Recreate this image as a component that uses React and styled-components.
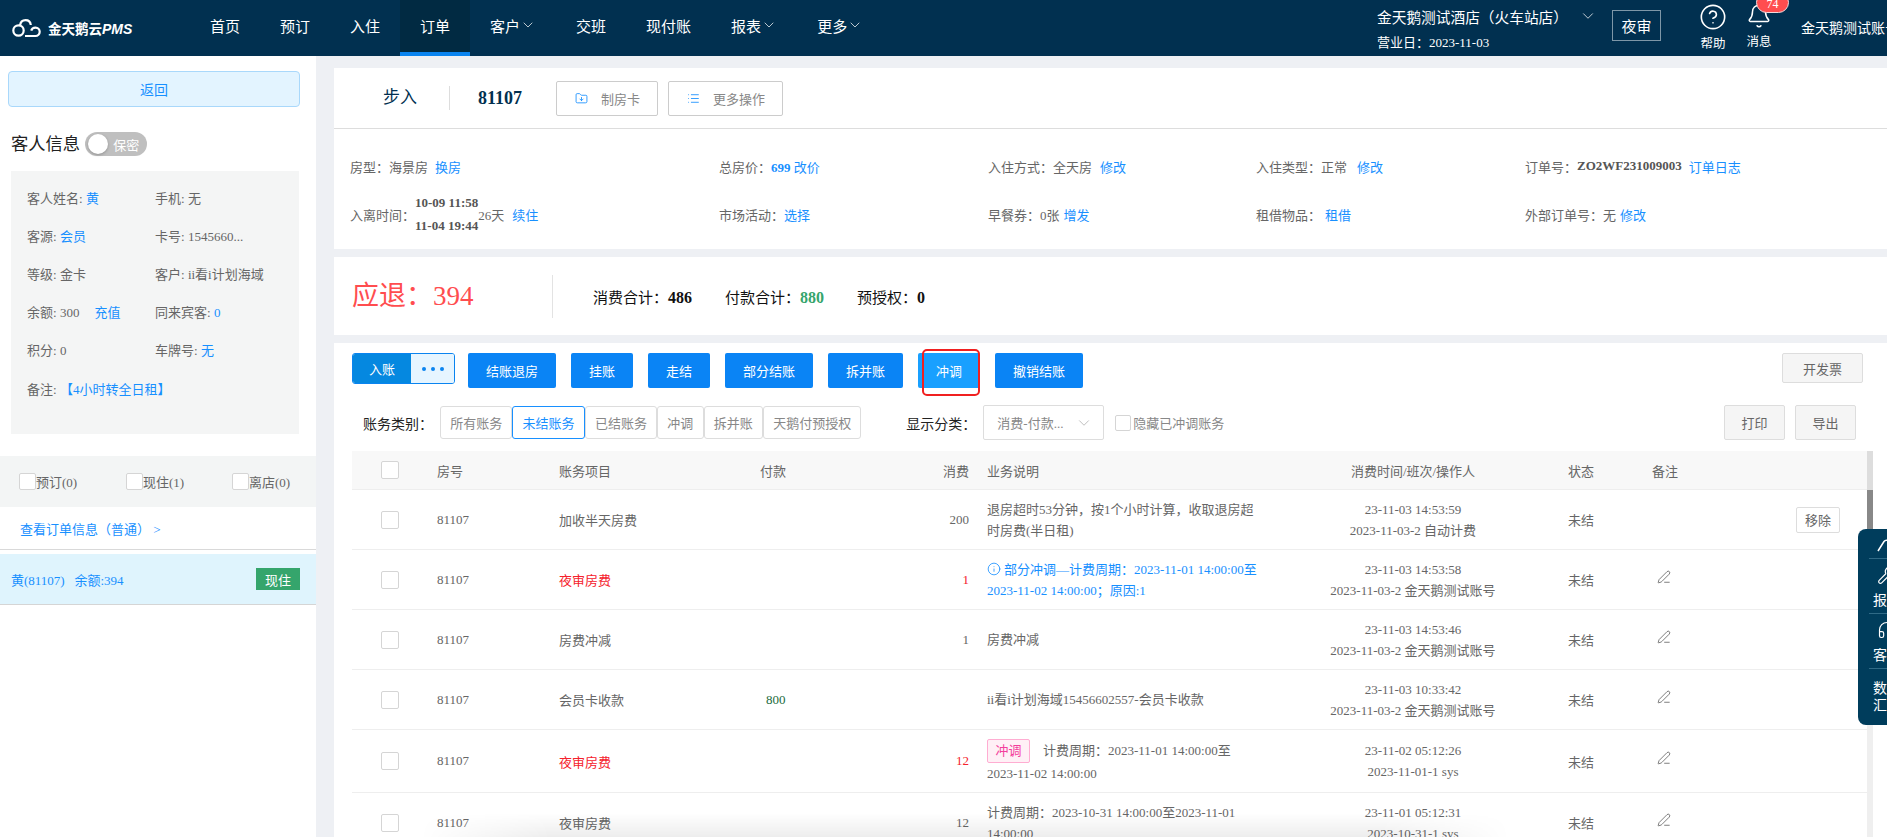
import styled, { createGlobalStyle } from "styled-components";
import { Bell, ChevronDown, CircleHelp, FolderDown, Headphones, Info, List, PenLine, Wrench } from "lucide-react";

const GlobalStyle = createGlobalStyle`
  html, body {
    margin: 0;
    padding: 0;
    height: 100%;
    overflow: hidden;
    background: #eef0f4;
    font-family: "Liberation Serif", "Noto Sans CJK SC", serif;
    font-size: 13px;
    color: #666;
  }
  * { box-sizing: border-box; }
`;

const navItems = [
  { label: "首页" },
  { label: "预订" },
  { label: "入住" },
  { label: "订单", active: true },
  { label: "客户", arrow: true },
  { label: "交班" },
  { label: "现付账" },
  { label: "报表", arrow: true },
  { label: "更多", arrow: true },
];

const guestRows = [
  [
    { label: "客人姓名: ", link: "黄" },
    { label: "手机: ", value: "无" },
  ],
  [
    { label: "客源: ", link: "会员" },
    { label: "卡号: ", value: "1545660..." },
  ],
  [
    { label: "等级: ", value: "金卡" },
    { label: "客户: ", value: "ii看i计划海域" },
  ],
  [
    { label: "余额: ", value: "300", action: "充值" },
    { label: "同来宾客: ", link: " 0" },
  ],
  [
    { label: "积分: ", value: "0" },
    { label: "车牌号: ", link: "无" },
  ],
];

const actions = ["结账退房", "挂账", "走结", "部分结账", "拆并账", "冲调", "撤销结账"];
const billTabs = ["所有账务", "未结账务", "已结账务", "冲调", "拆并账", "天鹅付预授权"];

const rows = [
  {
    name: "加收半天房费",
    fee: "200",
    desc: "退房超时53分钟，按1个小时计算，收取退房超时房费(半日租)",
    time: "23-11-03 14:53:59",
    shift: "2023-11-03-2 自动计费",
    removable: true,
  },
  {
    name: "夜审房费",
    red: true,
    fee: "1",
    info: true,
    desc: "部分冲调—计费周期：2023-11-01 14:00:00至2023-11-02 14:00:00；原因:1",
    time: "23-11-03 14:53:58",
    shift: "2023-11-03-2 金天鹅测试账号",
  },
  {
    name: "房费冲减",
    fee: "1",
    desc: "房费冲减",
    time: "23-11-03 14:53:46",
    shift: "2023-11-03-2 金天鹅测试账号",
  },
  {
    name: "会员卡收款",
    pay: "800",
    desc: "ii看i计划海域15456602557-会员卡收款",
    time: "23-11-03 10:33:42",
    shift: "2023-11-03-2 金天鹅测试账号",
  },
  {
    name: "夜审房费",
    red: true,
    fee: "12",
    tag: "冲调",
    tall: true,
    desc: "计费周期：2023-11-01 14:00:00至2023-11-02 14:00:00",
    time: "23-11-02 05:12:26",
    shift: "2023-11-01-1 sys",
  },
  {
    name: "夜审房费",
    fee: "12",
    desc: "计费周期：2023-10-31 14:00:00至2023-11-01 14:00:00",
    time: "23-11-01 05:12:31",
    shift: "2023-10-31-1 sys",
  },
];

const Logo = () => (
  <LogoWrap>
    <svg width="29" height="19" viewBox="0 0 29 19" fill="none" stroke="#fff" strokeWidth="2.2">
      <circle cx="6.5" cy="11.5" r="5.2" />
      <path d="M8 6.5C8.5 3 11 1.2 13.5 1.2c3 0 5 2 5.3 4.8M13 17h10.5a4.2 4.2 0 0 0 0-8.4c-2.3 0-3.8 1.2-4.3 3" />
    </svg>
    <LogoText>
      金天鹅云<LogoPms>PMS</LogoPms>
    </LogoText>
  </LogoWrap>
);

const App = () => {
  return (
    <>
      <GlobalStyle />
      <Header>
        <Logo />
        <Nav>
          {navItems.map((item) => (
            <NavItem key={item.label} $active={item.active}>
              {item.label}
              {item.arrow && <ChevronDown size={16} strokeWidth={1.1} />}
            </NavItem>
          ))}
        </Nav>
        <HotelBlock>
          <HotelName>
            金天鹅测试酒店（火车站店）
            <ChevronDown size={18} strokeWidth={1} />
          </HotelName>
          <BusinessDay>营业日：2023-11-03</BusinessDay>
        </HotelBlock>
        <NightAudit>夜审</NightAudit>
        <HeaderTool $first>
          <CircleHelp size={28} strokeWidth={1.4} />
          <span>帮助</span>
        </HeaderTool>
        <HeaderTool>
          <Bell size={26} strokeWidth={1.4} />
          <span>消息</span>
          <Badge>74</Badge>
        </HeaderTool>
        <Account>金天鹅测试账号</Account>
      </Header>

      <Body>
        <Sidebar>
          <BackButton>返回</BackButton>
          <GuestTitle>
            <GuestName>客人信息</GuestName>
            <Secret>
              <Knob />
              保密
            </Secret>
          </GuestTitle>
          <GuestBox>
            {guestRows.map((pair, i) => (
              <GuestRow key={i}>
                {pair.map((cell) => (
                  <GuestCell key={cell.label}>
                    {cell.label}
                    {cell.value}
                    {cell.link && <Link>{cell.link}</Link>}
                    {cell.action && <ActionLink>{cell.action}</ActionLink>}
                  </GuestCell>
                ))}
              </GuestRow>
            ))}
            <GuestRow>
              <GuestCell>
                备注: <Link>【4小时转全日租】</Link>
              </GuestCell>
            </GuestRow>
          </GuestBox>
          <StatusFilter>
            <StatusItem $width={107}>
              <CheckBox $size={17} />
              预订(0)
            </StatusItem>
            <StatusItem $width={106}>
              <CheckBox $size={17} />
              现住(1)
            </StatusItem>
            <StatusItem>
              <CheckBox $size={17} />
              离店(0)
            </StatusItem>
          </StatusFilter>
          <OrderLink>查看订单信息（普通） &gt;</OrderLink>
          <GuestListRow>
            <span>黄(81107)&nbsp;&nbsp;&nbsp;余额:394</span>
            <StayTag>现住</StayTag>
          </GuestListRow>
        </Sidebar>

        <Main>
          <TitleCard>
            <WalkIn>步入</WalkIn>
            <RoomNo>81107</RoomNo>
            <OutlineButton>
              <FolderDown size={13} color="#1890ff" strokeWidth={1.6} />
              制房卡
            </OutlineButton>
            <OutlineButton>
              <List size={13} color="#1890ff" strokeWidth={1.6} />
              更多操作
            </OutlineButton>
          </TitleCard>

          <InfoCard>
            <InfoCell>
              房型：海景房<InfoLink $gap={7}>换房</InfoLink>
            </InfoCell>
            <InfoCell>
              总房价：
              <InfoLink>
                <BlueBold>699</BlueBold> 改价
              </InfoLink>
            </InfoCell>
            <InfoCell>
              入住方式：全天房<InfoLink $gap={8}>修改</InfoLink>
            </InfoCell>
            <InfoCell>
              入住类型：正常<InfoLink $gap={10}>修改</InfoLink>
            </InfoCell>
            <InfoCell>
              订单号：<b>ZO2WF231009003</b>
              <InfoLink $gap={7}>订单日志</InfoLink>
            </InfoCell>
            <InfoCell>
              入离时间：
              <DateStack>
                <b>10-09 11:58</b>
                <b>11-04 19:44</b>
              </DateStack>
              26天<InfoLink $gap={8}>续住</InfoLink>
            </InfoCell>
            <InfoCell>
              市场活动：<InfoLink>选择</InfoLink>
            </InfoCell>
            <InfoCell>
              早餐券：0张<InfoLink $gap={4}>增发</InfoLink>
            </InfoCell>
            <InfoCell>
              租借物品：<InfoLink $gap={4}>租借</InfoLink>
            </InfoCell>
            <InfoCell>
              外部订单号：无<InfoLink $gap={4}>修改</InfoLink>
            </InfoCell>
          </InfoCard>

          <SummaryCard>
            <Refund>应退：394</Refund>
            <SummaryItem>
              消费合计：<b>486</b>
            </SummaryItem>
            <SummaryItem>
              付款合计：<Green>880</Green>
            </SummaryItem>
            <SummaryItem>
              预授权：<b>0</b>
            </SummaryItem>
          </SummaryCard>

          <BillCard>
            <Toolbar>
              <SplitButton>
                <SplitMain>入账</SplitMain>
                <SplitMore>
                  <Dot />
                  <Dot />
                  <Dot />
                </SplitMore>
              </SplitButton>
              {actions.map((label) => (
                <ActionButton key={label} $marked={label === "冲调"}>
                  {label}
                </ActionButton>
              ))}
              <InvoiceButton>开发票</InvoiceButton>
            </Toolbar>

            <FilterRow>
              <FilterLabel>账务类别：</FilterLabel>
              <Tabs>
                {billTabs.map((tab) => (
                  <Tab key={tab} $active={tab === "未结账务"}>
                    {tab}
                  </Tab>
                ))}
              </Tabs>
              <CategoryLabel>显示分类：</CategoryLabel>
              <SelectBox>
                消费-付款...
                <ChevronDown size={18} strokeWidth={1} color="#aaa" />
              </SelectBox>
              <CheckBox $size={16} />
              <HideLabel>隐藏已冲调账务</HideLabel>
              <GreyButton $first>打印</GreyButton>
              <GreyButton>导出</GreyButton>
            </FilterRow>

            <TableWrap>
              <Table>
                <HeadRow>
                  <CheckCell>
                    <CheckBox $size={18} />
                  </CheckCell>
                  <div>房号</div>
                  <div>账务项目</div>
                  <div>付款</div>
                  <FeeHead>消费</FeeHead>
                  <DescHead>业务说明</DescHead>
                  <TimeHead>消费时间/班次/操作人</TimeHead>
                  <StatusHead>状态</StatusHead>
                  <div>备注</div>
                </HeadRow>
                {rows.map((row, i) => (
                  <BodyRow key={i} $tall={row.tall}>
                    <CheckCell>
                      <CheckBox $size={18} />
                    </CheckCell>
                    <div>81107</div>
                    <ItemName $red={row.red}>{row.name}</ItemName>
                    <PayCell>{row.pay}</PayCell>
                    <FeeCell $red={row.red}>{row.fee}</FeeCell>
                    <DescCell $blue={row.info}>
                      {row.info && <InfoIcon size={14} strokeWidth={1.4} />}
                      {row.tag && <RushTag>{row.tag}</RushTag>}
                      {row.desc}
                    </DescCell>
                    <TimeCell>
                      <div>{row.time}</div>
                      <div>{row.shift}</div>
                    </TimeCell>
                    <StatusCell>未结</StatusCell>
                    <RemarkCell>
                      {!row.removable && <EditIcon size={14} strokeWidth={1.3} />}
                      {row.removable && <RemoveButton>移除</RemoveButton>}
                    </RemarkCell>
                  </BodyRow>
                ))}
              </Table>
              <ScrollTrack>
                <ScrollHead />
                <ScrollThumb />
              </ScrollTrack>
            </TableWrap>
          </BillCard>
        </Main>
      </Body>

      <SidePanel>
        <PanelItem $height={30}>
          <svg width="20" height="20" viewBox="0 0 20 20" fill="none" stroke="#fff" strokeWidth="1.5">
            <path d="M1 16 7 6.5c.6-.9 1.5-1.3 2.5-1.3H19" />
          </svg>
        </PanelItem>
        <PanelItem $height={55}>
          <Wrench size={20} strokeWidth={1.4} />
          <span>报修</span>
        </PanelItem>
        <PanelItem $height={55}>
          <Headphones size={20} strokeWidth={1.4} />
          <span>客服</span>
        </PanelItem>
        <PanelWords>
          <span>数据</span>
          <span>汇总</span>
        </PanelWords>
      </SidePanel>
      <BottomShade />
    </>
  );
};

const Header = styled.header`
  display: flex;
  align-items: stretch;
  height: 56px;
  background: #013050;
  color: #fff;
  overflow: hidden;
`;

const LogoWrap = styled.div`
  display: flex;
  align-items: center;
  gap: 7px;
  flex: 0 0 190px;
  padding-left: 12px;
`;

const LogoText = styled.div`
  font-family: "Noto Sans CJK SC", sans-serif;
  font-weight: 700;
  font-size: 13.5px;
  white-space: nowrap;
`;

const LogoPms = styled.span`
  font-family: "Liberation Sans", sans-serif;
  font-style: italic;
  font-size: 14px;
`;

const Nav = styled.nav`
  display: flex;
  flex: 1;
  min-width: 0;
`;

const NavItem = styled.div`
  display: flex;
  align-items: center;
  justify-content: center;
  padding: 0 20px 2px;
  font-size: 15px;
  white-space: nowrap;
  background: ${(p) => (p.$active ? "#012a42" : "transparent")};
  border-bottom: 4px solid ${(p) => (p.$active ? "#0a84f0" : "transparent")};
`;

const HotelBlock = styled.div`
  display: flex;
  flex-direction: column;
  justify-content: center;
  gap: 5px;
  flex: 0 0 235px;
`;

const HotelName = styled.div`
  display: flex;
  align-items: center;
  gap: 11px;
  font-size: 14.7px;
  white-space: nowrap;
`;

const BusinessDay = styled.div`
  font-size: 13px;
`;

const NightAudit = styled.div`
  align-self: flex-start;
  display: flex;
  flex: none;
  align-items: center;
  justify-content: center;
  width: 49px;
  height: 31px;
  margin-top: 10px;
  border: 1px solid #7e97a8;
  font-size: 15px;
`;

const HeaderTool = styled.div`
  position: relative;
  display: flex;
  flex: none;
  flex-direction: column;
  align-items: center;
  justify-content: flex-start;
  gap: 2px;
  width: 46px;
  margin-left: ${(p) => (p.$first ? "29px" : "0")};
  padding-top: 3px;
  font-size: 12.5px;
`;

const Badge = styled.span`
  position: absolute;
  top: -8px;
  left: 20px;
  display: flex;
  align-items: center;
  justify-content: center;
  width: 33px;
  height: 21px;
  padding-top: 3px;
  border-radius: 11px;
  border: 1px solid #f4d9da;
  background: #ff4d4f;
  color: #fff;
  font-size: 12px;
`;

const Account = styled.div`
  flex: 0 0 86px;
  margin-left: 19px;
  padding-top: 17px;
  font-size: 14px;
  white-space: nowrap;
  overflow: hidden;
`;

const Body = styled.div`
  display: flex;
  height: 781px;
`;

const Sidebar = styled.aside`
  flex: 0 0 316px;
  padding-top: 15px;
  background: #fff;
`;

const BackButton = styled.div`
  display: flex;
  align-items: center;
  justify-content: center;
  width: 292px;
  height: 36px;
  margin-left: 8px;
  border: 1px solid #a9d8fb;
  border-radius: 4px;
  background: #e3f4ff;
  color: #1890ff;
  font-size: 14px;
`;

const GuestTitle = styled.div`
  display: flex;
  align-items: center;
  gap: 5px;
  height: 24px;
  margin: 25px 0 15px 11px;
  color: #222;
`;

const GuestName = styled.span`
  margin-bottom: 3px;
  font-size: 17.3px;
`;

const Secret = styled.div`
  display: flex;
  align-items: center;
  gap: 5px;
  width: 62px;
  height: 24px;
  padding-left: 3px;
  border-radius: 12px;
  background: #bfbfbf;
  color: #fff;
  font-size: 13px;
`;

const Knob = styled.span`
  width: 20px;
  height: 20px;
  border-radius: 50%;
  background: #fff;
  box-shadow: 0 1px 3px rgba(0, 0, 0, 0.25);
`;

const GuestBox = styled.div`
  width: 288px;
  height: 263px;
  margin-left: 11px;
  padding: 7px 0 0 16px;
  background: #f4f5f5;
`;

const GuestRow = styled.div`
  display: flex;
  align-items: center;
  height: 38.2px;
`;

const GuestCell = styled.div`
  flex: 0 0 128px;
  white-space: nowrap;
`;

const Link = styled.span`
  color: #1890ff;
`;

const ActionLink = styled(Link)`
  margin-left: 15px;
`;

const StatusFilter = styled.div`
  display: flex;
  align-items: center;
  height: 51px;
  margin-top: 22px;
  padding-left: 19px;
  background: #f3f5f5;
`;

const StatusItem = styled.div`
  display: flex;
  align-items: center;
  flex: 0 0 ${(p) => (p.$width ? `${p.$width}px` : "auto")};
`;

const CheckBox = styled.span`
  display: inline-block;
  flex: none;
  width: ${(p) => p.$size}px;
  height: ${(p) => p.$size}px;
  border: 1px solid #d5d5d5;
  border-radius: 2px;
  background: #fff;
`;

const OrderLink = styled.div`
  display: flex;
  align-items: center;
  height: 43px;
  padding-left: 20px;
  border-bottom: 1px solid #d9d9d9;
  color: #1890ff;
`;

const GuestListRow = styled.div`
  display: flex;
  align-items: center;
  justify-content: space-between;
  height: 51px;
  margin-top: 4px;
  padding: 0 16px 0 11px;
  border-bottom: 1px solid #d5d5d5;
  background: #dff4fd;
  color: #1890ff;
`;

const StayTag = styled.span`
  display: flex;
  align-items: center;
  justify-content: center;
  width: 44px;
  height: 22px;
  background: #35a56c;
  color: #fff;
`;

const Main = styled.main`
  flex: 1;
  min-width: 0;
  margin-left: 18px;
  padding-top: 12px;
`;

const TitleCard = styled.section`
  display: flex;
  align-items: center;
  height: 61px;
  padding-left: 49px;
  border-bottom: 1px solid #ddd;
  background: #fff;
`;

const WalkIn = styled.div`
  width: 67px;
  height: 24px;
  border-right: 1px solid #ddd;
  color: #013050;
  font-size: 17px;
  line-height: 24px;
`;

const RoomNo = styled.div`
  margin: 0 34px 0 28px;
  color: #013050;
  font-size: 18px;
  font-weight: 700;
`;

const OutlineButton = styled.div`
  display: flex;
  align-items: center;
  gap: 13px;
  height: 35px;
  margin-right: 10px;
  padding: 0 17px 0 18px;
  border: 1px solid #ccc;
  border-radius: 2px;
  color: #888;
`;

const InfoCard = styled.section`
  display: grid;
  grid-template-columns: 369px 269px 268px 269px 1fr;
  grid-auto-rows: 48px;
  height: 120px;
  padding: 13px 0 0 16px;
  background: #fff;
`;

const InfoCell = styled.div`
  display: flex;
  align-items: center;
  b {
    color: #555;
  }
`;

const InfoLink = styled(Link)`
  margin-left: ${(p) => p.$gap || 0}px;
`;

const BlueBold = styled.b`
  && {
    color: #1890ff;
  }
`;

const DateStack = styled.div`
  display: flex;
  flex-direction: column;
  gap: 7px;
`;

const SummaryCard = styled.section`
  display: flex;
  align-items: center;
  height: 78px;
  margin-top: 8px;
  padding-left: 18px;
  background: #fff;
  color: #111;
  font-size: 15px;
`;

const Refund = styled.div`
  width: 201px;
  height: 43px;
  margin-right: 40px;
  border-right: 1px solid #e3e3e3;
  color: #ff4d4f;
  font-size: 27px;
  line-height: 43px;
`;

const SummaryItem = styled.div`
  margin-right: 33px;
  b {
    font-size: 16px;
    font-weight: 700;
  }
`;

const Green = styled.b`
  color: #35a56c;
`;

const BillCard = styled.section`
  height: 494px;
  margin-top: 8px;
  padding-top: 10px;
  background: #fff;
  overflow: hidden;
`;

const Toolbar = styled.div`
  display: flex;
  align-items: flex-start;
  gap: 15px;
  padding: 0 24px 0 18px;
`;

const SplitButton = styled.div`
  display: flex;
  flex: none;
  width: 103px;
  height: 31px;
  margin-right: -2px;
  border: 1px solid #0a84f0;
  border-radius: 3px;
  overflow: hidden;
`;

const SplitMain = styled.div`
  display: flex;
  align-items: center;
  justify-content: center;
  width: 58px;
  background: #0588e0;
  color: #fff;
`;

const SplitMore = styled.div`
  display: flex;
  flex: 1;
  align-items: center;
  justify-content: center;
  gap: 5px;
  background: #e6f5ff;
`;

const Dot = styled.span`
  width: 4px;
  height: 4px;
  border-radius: 50%;
  background: #0a84f0;
`;

const ActionButton = styled.div`
  position: relative;
  display: flex;
  align-items: center;
  justify-content: center;
  height: 35px;
  padding: 0 18px;
  border-radius: 2px;
  background: ${(p) => (p.$marked ? "#19a0ff" : "#0a84f5")};
  color: #fff;
  white-space: nowrap;
  ${(p) =>
    p.$marked &&
    `&::after {
      content: "";
      position: absolute;
      inset: -4px 0 -8px 4px;
      border: 2px solid #f02020;
      border-radius: 5px;
    }`}
`;

const GreyButton = styled.div`
  display: flex;
  align-items: center;
  justify-content: center;
  width: 61px;
  height: 35px;
  margin-left: ${(p) => (p.$first ? "auto" : "10px")};
  border: 1px solid #ddd;
  border-radius: 2px;
  background: #f5f5f5;
  color: #666;
`;

const InvoiceButton = styled(GreyButton)`
  width: 81px;
  height: 30px;
  margin-left: auto;
`;

const FilterRow = styled.div`
  display: flex;
  align-items: center;
  height: 35px;
  margin-top: 17px;
  padding: 0 31px 0 29px;
`;

const FilterLabel = styled.div`
  width: 77px;
  color: #222;
  font-size: 14px;
`;

const Tabs = styled.div`
  display: flex;
`;

const Tab = styled.div`
  display: flex;
  align-items: center;
  height: 33px;
  padding: 0 9.2px;
  border: 1px solid ${(p) => (p.$active ? "#1890ff" : "#ddd")};
  border-radius: 3px;
  color: ${(p) => (p.$active ? "#1890ff" : "#888")};
`;

const CategoryLabel = styled(FilterLabel)`
  margin-left: 45px;
`;

const SelectBox = styled.div`
  display: flex;
  align-items: center;
  justify-content: space-between;
  width: 121px;
  height: 35px;
  margin-right: 11px;
  padding: 0 10px 0 13px;
  border: 1px solid #ddd;
  border-radius: 2px;
  color: #888;
  white-space: nowrap;
`;

const HideLabel = styled.div`
  margin-left: 2px;
  color: #888;
`;

const TableWrap = styled.div`
  display: flex;
  width: 1521px;
  margin: 11px 0 0 18px;
`;

const Table = styled.div`
  flex: 1;
  min-width: 0;
`;

const columns = "85px 122px 201px 100px 109px 299px 290px 94px 215px";

const HeadRow = styled.div`
  display: grid;
  grid-template-columns: ${columns};
  align-items: center;
  height: 39px;
  border-bottom: 1px solid #eee;
  background: #f8f8f8;
`;

const BodyRow = styled.div`
  display: grid;
  grid-template-columns: ${columns};
  align-items: center;
  height: ${(p) => (p.$tall ? "63px" : "60px")};
  border-bottom: 1px solid #eee;
`;

const CheckCell = styled.div`
  display: flex;
  padding-left: 29px;
`;

const FeeHead = styled.div`
  text-align: right;
`;

const DescHead = styled.div`
  padding-left: 18px;
`;

const TimeHead = styled.div`
  text-align: center;
`;

const StatusHead = styled.div`
  padding-left: 10px;
`;

const ItemName = styled.div`
  color: ${(p) => (p.$red ? "#f5222d" : "#666")};
`;

const PayCell = styled.div`
  padding-left: 6px;
  color: #1a6b3c;
`;

const FeeCell = styled.div`
  color: ${(p) => (p.$red ? "#f5222d" : "#666")};
  text-align: right;
`;

const DescCell = styled.div`
  padding: 0 9px 0 18px;
  color: ${(p) => (p.$blue ? "#1890ff" : "#666")};
  line-height: 21px;
`;

const InfoIcon = styled(Info)`
  margin-right: 3px;
  vertical-align: -2px;
`;

const RushTag = styled.span`
  display: inline-block;
  width: 43px;
  height: 24px;
  margin-right: 13px;
  border: 1px solid #ffadd2;
  border-radius: 2px;
  background: #fff0f6;
  color: #f33f9c;
  line-height: 22px;
  text-align: center;
`;

const TimeCell = styled.div`
  line-height: 21px;
  text-align: center;
`;

const StatusCell = styled.div`
  padding-left: 10px;
`;

const RemarkCell = styled.div`
  display: flex;
  align-items: center;
  padding: 0 27px 0 5px;
`;

const EditIcon = styled(PenLine)`
  margin-top: -6px;
  color: #555;
`;

const RemoveButton = styled.div`
  display: flex;
  align-items: center;
  justify-content: center;
  width: 44px;
  height: 26px;
  margin-left: auto;
  border: 1px solid #ddd;
  border-radius: 2px;
`;

const ScrollTrack = styled.div`
  flex: 0 0 6px;
  background: #efefef;
`;

const ScrollHead = styled.div`
  height: 39px;
  background: #ddd;
`;

const ScrollThumb = styled.div`
  height: 41px;
  background: #888;
`;

const SidePanel = styled.div`
  position: fixed;
  top: 529px;
  left: 1858px;
  width: 60px;
  height: 196px;
  padding-left: 11px;
  border-radius: 8px 0 0 8px;
  background: #003d5c;
  color: #fff;
  font-size: 14px;
  overflow: hidden;
`;

const PanelItem = styled.div`
  display: flex;
  flex-direction: column;
  align-items: center;
  gap: 6px;
  width: 36px;
  height: ${(p) => p.$height}px;
  padding-top: 6px;
  border-bottom: 1px solid #2f6a86;
  line-height: 20px;
`;

const PanelWords = styled.div`
  display: flex;
  flex-direction: column;
  align-items: center;
  justify-content: center;
  width: 36px;
  height: 55px;
  line-height: 17px;
`;

const BottomShade = styled.div`
  position: fixed;
  left: 420px;
  bottom: 0;
  width: 1090px;
  height: 24px;
  background: linear-gradient(to bottom, rgba(0, 0, 0, 0), rgba(0, 0, 0, 0.07));
  mask-image: linear-gradient(to right, transparent, #000 12%, #000 88%, transparent);
  pointer-events: none;
`;

export default App;
